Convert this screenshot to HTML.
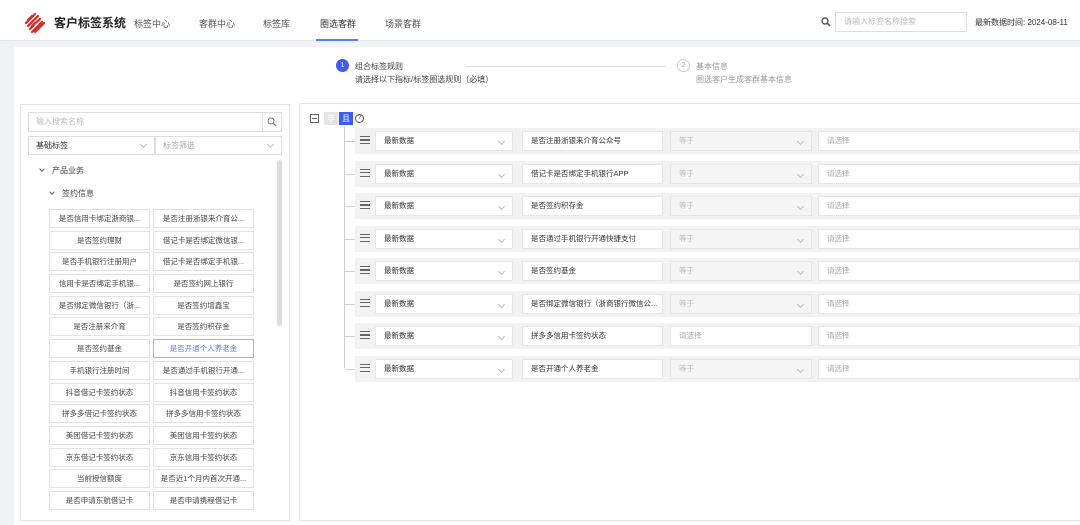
<!DOCTYPE html>
<html><head><meta charset="utf-8"><style>
*{box-sizing:border-box;margin:0;padding:0}
body{width:1080px;height:525px;overflow:hidden;background:#f0f2f5;font-family:"Liberation Sans","Noto Sans CJK SC",sans-serif;font-size:8px;color:#333;position:relative}
.a{position:absolute}
.hdr{left:0;top:0;width:1080px;height:41px;background:#fff;border-bottom:1px solid #e4e7ed}
.nav{top:17px;font-size:9px;color:#555}
.card{left:14px;top:47px;width:1066px;height:478px;background:#fff}
.box{border:1px solid #e4e4e4;background:#fff}
.tag{width:101px;height:19px;border:1px solid #e2e2e2;background:#fff;font-size:7.5px;color:#444;text-align:center;line-height:17px;white-space:nowrap;overflow:hidden}
.row{left:355px;width:725px;height:26px;background:#f2f2f2}
.sel{height:20px;top:3px;background:#fff;border:1px solid #e6e6e6;font-size:7.5px;line-height:18px;padding-left:8px;color:#333}
.dis{background:#f5f5f5;color:#bbb}
.ph{color:#aaa}
.chev{position:absolute;right:8px;top:7px;width:5px;height:5px;border-right:1px solid #bbb;border-bottom:1px solid #bbb;transform:rotate(45deg)}
.ham{left:5px;top:8px;width:10px;height:8px;border-top:1.5px solid #666;border-bottom:1.5px solid #666}
.ham:after{content:"";position:absolute;left:0;top:2px;width:10px;height:1.5px;background:#666}
.tv{display:inline-block;width:4px;height:4px;border-right:1px solid #666;border-bottom:1px solid #666;transform:rotate(45deg);margin:0 8px 2px 2px}
</style></head><body>
<div class="a hdr"></div>
<svg class="a" style="left:23px;top:11px" width="24" height="24" viewBox="0 0 24 24">
<g stroke="#e4231e" stroke-width="2.2" stroke-linecap="round">
<line x1="3" y1="12" x2="12" y2="3"/><line x1="5" y1="15" x2="15" y2="5"/><line x1="9" y1="15" x2="17" y2="8"/><line x1="7" y1="18" x2="10" y2="15"/><line x1="9" y1="21" x2="19" y2="11"/><line x1="12" y1="21" x2="21" y2="12"/><line x1="5" y1="9" x2="9" y2="5"/>
</g></svg>
<div class="a" style="left:54px;top:14px;font-size:12px;font-weight:bold;color:#222">客户标签系统</div>
<div class="a nav" style="left:134px">标签中心</div>
<div class="a nav" style="left:199px">客群中心</div>
<div class="a nav" style="left:263px">标签库</div>
<div class="a nav" style="left:320px;color:#333">圈选客群</div>
<div class="a" style="left:316px;top:39px;width:42px;height:2px;background:#5b7cff"></div>
<div class="a nav" style="left:385px">场景客群</div>
<svg class="a" style="left:821px;top:17px" width="10" height="10" viewBox="0 0 10 10"><circle cx="4" cy="4" r="3" fill="none" stroke="#555" stroke-width="1.4"/><line x1="6.2" y1="6.2" x2="9" y2="9" stroke="#555" stroke-width="1.5"/></svg>
<div class="a" style="left:835px;top:12px;width:132px;height:20px;border:1px solid #ddd;background:#fff;font-size:8px;color:#bbb;line-height:18px;padding-left:8px">请输入标签名称搜索</div>
<div class="a" style="left:975px;top:17px;font-size:8px;color:#333">最新数据时间: 2024-08-11</div>

<div class="a card"></div>
<div class="a" style="left:336px;top:59px;width:13px;height:13px;border-radius:50%;background:#3d5afe;color:#fff;font-size:7px;text-align:center;line-height:13px">1</div>
<div class="a" style="left:355px;top:61px;font-size:8px;color:#444">组合标签规则</div>
<div class="a" style="left:355px;top:74px;font-size:8px;color:#444">请选择以下指标/标签圈选规则（必填）</div>
<div class="a" style="left:466px;top:66px;width:200px;height:1px;background:#ddd"></div>
<div class="a" style="left:677px;top:59px;width:13px;height:13px;border-radius:50%;border:1px solid #ccc;color:#aaa;font-size:7px;text-align:center;line-height:11px">2</div>
<div class="a" style="left:696px;top:61px;font-size:8px;color:#999">基本信息</div>
<div class="a" style="left:696px;top:74px;font-size:8px;color:#999">圈选客户生成客群基本信息</div>

<div class="a box" style="left:20px;top:104px;width:270px;height:417px"></div>
<div class="a" style="left:28px;top:112px;width:254px;height:20px;border:1px solid #ddd;font-size:8px;color:#bbb;line-height:18px;padding-left:7px">输入搜索名称</div>
<div class="a" style="left:262px;top:112px;width:20px;height:20px;border-left:1px solid #ddd"></div>
<svg class="a" style="left:267px;top:117px" width="10" height="10" viewBox="0 0 10 10"><circle cx="4" cy="4" r="3" fill="none" stroke="#777" stroke-width="1"/><line x1="6.2" y1="6.2" x2="9" y2="9" stroke="#777" stroke-width="1.1"/></svg>
<div class="a" style="left:28px;top:136px;width:127px;height:19px;border:1px solid #ddd;font-size:8px;color:#333;line-height:17px;padding-left:7px">基础标签<span class="chev" style="top:5px"></span></div>
<div class="a" style="left:155px;top:136px;width:127px;height:19px;border:1px solid #ddd;font-size:8px;color:#aaa;line-height:17px;padding-left:7px">标签筛选<span class="chev" style="top:5px"></span></div>
<div class="a" style="left:38px;top:165px;font-size:8px;color:#444"><span class="tv"></span>产品业务</div>
<div class="a" style="left:48px;top:188px;font-size:8px;color:#444"><span class="tv"></span>签约信息</div>
<div class="a" style="left:277px;top:160px;width:5px;height:166px;background:#ddd;border-radius:3px"></div>

<div class="a" style="left:49px;top:209px;width:206px">
<div style="display:grid;grid-template-columns:101px 101px;column-gap:3px;row-gap:2.7px">
<div class="tag">是否信用卡绑定浙商银...</div><div class="tag">是否注册浙银来介育公...</div>
<div class="tag">是否签约理财</div><div class="tag">借记卡是否绑定微信银...</div>
<div class="tag">是否手机银行注册用户</div><div class="tag">借记卡是否绑定手机银...</div>
<div class="tag">信用卡是否绑定手机银...</div><div class="tag">是否签约网上银行</div>
<div class="tag">是否绑定微信银行（浙...</div><div class="tag">是否签约增鑫宝</div>
<div class="tag">是否注册来介育</div><div class="tag">是否签约积存金</div>
<div class="tag">是否签约基金</div><div class="tag" style="border-color:#9fb0ff;color:#5b7cff">是否开通个人养老金</div>
<div class="tag">手机银行注册时间</div><div class="tag">是否通过手机银行开通...</div>
<div class="tag">抖音借记卡签约状态</div><div class="tag">抖音信用卡签约状态</div>
<div class="tag">拼多多借记卡签约状态</div><div class="tag">拼多多信用卡签约状态</div>
<div class="tag">美团借记卡签约状态</div><div class="tag">美团信用卡签约状态</div>
<div class="tag">京东借记卡签约状态</div><div class="tag">京东信用卡签约状态</div>
<div class="tag">当前授信额度</div><div class="tag">是否近1个月内首次开通...</div>
<div class="tag">是否申请东航借记卡</div><div class="tag">是否申请携程借记卡</div>
</div></div>

<div class="a box" style="left:299px;top:103px;width:790px;height:418px"></div>
<div class="a" style="left:310px;top:114px;width:9px;height:9px;border:1px solid #666"></div>
<div class="a" style="left:312px;top:118px;width:5px;height:1px;background:#666"></div>
<div class="a" style="left:324px;top:112px;width:14px;height:13px;background:#e4e4e4;color:#fff;font-size:8px;text-align:center;line-height:13px">非</div>
<div class="a" style="left:339px;top:112px;width:14px;height:13px;background:#3d5afe;color:#fff;font-size:8px;text-align:center;line-height:13px">且</div>
<div class="a" style="left:355px;top:114px;width:9px;height:9px;border:1px solid #555;border-radius:50%;font-size:6px;text-align:center;line-height:7px">?</div>
<div class="a" style="left:344px;top:126px;width:1px;height:242px;background:#ccc"></div>

<div id="rows"></div>
<script>
var d=[["是否注册浙银来介育公众号",0],["借记卡是否绑定手机银行APP",0],["是否签约积存金",0],["是否通过手机银行开通快捷支付",0],["是否签约基金",0],["是否绑定微信银行（浙商银行微信公...",0],["拼多多信用卡签约状态",1],["是否开通个人养老金",0]];
var h="";
d.forEach(function(r,i){var t=128+i*32.5;
h+='<div class="a" style="left:345px;top:'+(t+13)+'px;width:10px;height:1px;background:#ccc"></div>';
h+='<div class="a row" style="top:'+t+'px"><div class="a ham"></div>'+
'<div class="a sel" style="left:20px;width:138px">最新数据<span class="chev"></span></div>'+
'<div class="a sel" style="left:167px;width:141px">'+r[0]+'</div>'+
(r[1]?'<div class="a sel ph" style="left:315px;width:142px">请选择</div>':'<div class="a sel dis" style="left:315px;width:142px">等于<span class="chev"></span></div>')+
'<div class="a sel ph" style="left:463px;width:262px">请选择</div></div>';});
document.getElementById("rows").innerHTML=h;
</script>
</body></html>
